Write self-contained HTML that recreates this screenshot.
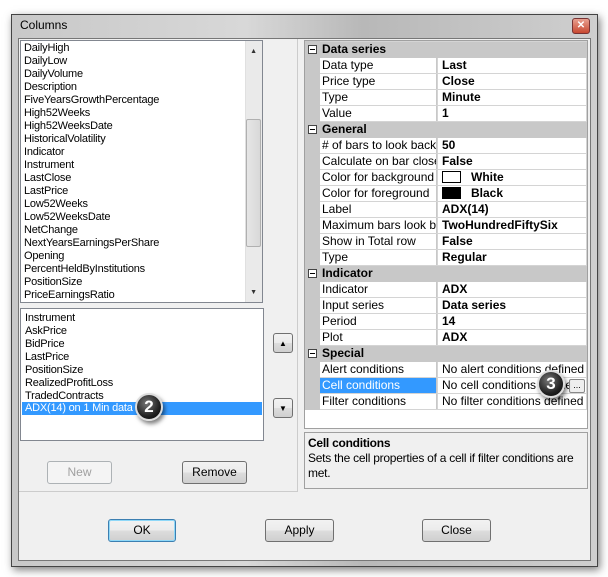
<!DOCTYPE html>
<html><head><style>
*{margin:0;padding:0;box-sizing:border-box}
body{width:608px;height:577px;background:#fff;position:relative;overflow:hidden;font-family:"Liberation Sans",sans-serif;font-size:11px;color:#000}
.a{position:absolute}
.win{left:11px;top:14px;width:587px;height:553px;background:linear-gradient(90deg,#c8c8c8,#d8d8d8 40%,#b8b8b8 60%,#cfcfcf);border:1px solid #444;box-shadow:2px 3px 8px rgba(0,0,0,.5)}
.client{left:18px;top:38px;width:573px;height:523px;background:#f0f0f0;border:1px solid #777}
.list{background:#fff;border:1px solid #828790}
.it{position:absolute;left:4px;height:13px;line-height:13px;white-space:nowrap;letter-spacing:-0.2px}
.btn{position:absolute;border:1px solid #707070;border-radius:3px;background:linear-gradient(#f2f2f2,#ebebeb 50%,#dddddd 50%,#cfcfcf);text-align:center;line-height:20px;font-size:12px}
.row{position:absolute;left:305px;width:282px;height:16px;line-height:15px;font-size:12px}
.row .n{position:absolute;left:15px;width:117px;height:15px;background:#fff;padding-left:2px;overflow:hidden;white-space:nowrap;border-right:1px solid #c8c8c8;color:#000}
.row .v{position:absolute;left:133px;width:148px;height:15px;background:#fff;padding-left:4px;font-weight:bold;white-space:nowrap;overflow:hidden}
.cat{background:#c8c8c8;font-weight:bold}
.cat span.b{position:absolute;left:3px;top:3px;width:9px;height:9px;border:1px solid #444;background:#fff}
.cat span.b:after{content:"";position:absolute;left:1px;top:3px;width:5px;height:1px;background:#000}
.cat .t{position:absolute;left:17px}
.badge{position:absolute;width:28px;height:28px;border-radius:50%;background:radial-gradient(circle at 40% 35%,#777,#222 60%,#000);border:2px solid #ddd;color:#fff;font-weight:bold;font-size:17px;text-align:center;line-height:24px;box-shadow:2px 3px 4px rgba(0,0,0,.5)}
</style></head><body>
<div class="a win"></div>
<div class="a" style="left:20px;top:18px;font-size:12px;color:#000">Columns</div>
<div class="a" style="left:572px;top:18px;width:18px;height:16px;border:1px solid #733;border-radius:3px;background:linear-gradient(#e8a090,#c84830);color:#fff;font-size:10px;text-align:center;line-height:14px;font-weight:bold">✕</div>
<div class="a client"></div>
<div class="a" style="left:19px;top:39px;width:279px;height:453px;border-right:1px solid #ccc;border-bottom:1px solid #ccc"></div>
<div class="a list" style="left:20px;top:40px;width:243px;height:263px;overflow:hidden">
<div class="a" style="right:0;top:0;width:17px;height:261px;background:#eaeaea;border-left:1px solid #e0e0e0"></div>
<div class="a" style="right:5px;top:7px;font-size:7px;color:#333">▲</div>
<div class="a" style="right:5px;top:248px;font-size:7px;color:#333">▼</div>
<div class="a" style="right:1px;top:78px;width:15px;height:128px;background:linear-gradient(90deg,#e6e6e6,#d8d8d8);border:1px solid #b0b0b0;border-radius:2px"></div>
</div>
<div class="a" style="left:20px;top:40px;width:226px;height:263px;overflow:hidden">
<div class="it" style="top:2px">DailyHigh</div><div class="it" style="top:15px">DailyLow</div><div class="it" style="top:28px">DailyVolume</div><div class="it" style="top:41px">Description</div><div class="it" style="top:54px">FiveYearsGrowthPercentage</div><div class="it" style="top:67px">High52Weeks</div><div class="it" style="top:80px">High52WeeksDate</div><div class="it" style="top:93px">HistoricalVolatility</div><div class="it" style="top:106px">Indicator</div><div class="it" style="top:119px">Instrument</div><div class="it" style="top:132px">LastClose</div><div class="it" style="top:145px">LastPrice</div><div class="it" style="top:158px">Low52Weeks</div><div class="it" style="top:171px">Low52WeeksDate</div><div class="it" style="top:184px">NetChange</div><div class="it" style="top:197px">NextYearsEarningsPerShare</div><div class="it" style="top:210px">Opening</div><div class="it" style="top:223px">PercentHeldByInstitutions</div><div class="it" style="top:236px">PositionSize</div><div class="it" style="top:249px">PriceEarningsRatio</div>
</div>
<div class="a list" style="left:20px;top:308px;width:244px;height:133px">
<div class="it" style="top:3px">Instrument</div><div class="it" style="top:16px">AskPrice</div><div class="it" style="top:29px">BidPrice</div><div class="it" style="top:42px">LastPrice</div><div class="it" style="top:55px">PositionSize</div><div class="it" style="top:68px">RealizedProfitLoss</div><div class="it" style="top:81px">TradedContracts</div>
<div class="a" style="left:1px;top:93px;width:240px;height:13px;background:#3399ff"></div>
<div class="it" style="top:93px;color:#fff">ADX(14) on 1 Min data</div>
</div>
<div class="badge" style="left:135px;top:393px">2</div>
<div class="btn" style="left:273px;top:333px;width:20px;height:20px;font-size:8px">▲</div>
<div class="btn" style="left:273px;top:398px;width:20px;height:20px;font-size:8px">▼</div>
<div class="btn" style="left:47px;top:461px;width:65px;height:23px;color:#a0a0a0;background:#f4f4f4;border-color:#adb2b5">New</div>
<div class="btn" style="left:182px;top:461px;width:65px;height:23px">Remove</div>
<div class="a" style="left:304px;top:40px;width:284px;height:389px;background:#fff;border:1px solid #a0a0a0"></div>
<div class="a" style="left:305px;top:41px;width:282px;height:369px;background:#d4d4d4"></div>
<div class="a" style="left:305px;top:41px;width:15px;height:369px;background:#c8c8c8"></div>
<div class="row cat" style="top:42px"><span class="b"></span><span class="t">Data series</span></div>
<div class="row" style="top:58px"><div class="n">Data type</div><div class="v">Last</div></div>
<div class="row" style="top:74px"><div class="n">Price type</div><div class="v">Close</div></div>
<div class="row" style="top:90px"><div class="n">Type</div><div class="v">Minute</div></div>
<div class="row" style="top:106px"><div class="n">Value</div><div class="v">1</div></div>
<div class="row cat" style="top:122px"><span class="b"></span><span class="t">General</span></div>
<div class="row" style="top:138px"><div class="n"># of bars to look back</div><div class="v">50</div></div>
<div class="row" style="top:154px"><div class="n">Calculate on bar close</div><div class="v">False</div></div>
<div class="row" style="top:170px"><div class="n">Color for background</div><div class="v"><span style="display:inline-block;width:19px;height:12px;border:1px solid #000;background:#fff;vertical-align:-2px;margin-right:10px"></span>White</div></div>
<div class="row" style="top:186px"><div class="n">Color for foreground</div><div class="v"><span style="display:inline-block;width:19px;height:12px;border:1px solid #000;background:#000;vertical-align:-2px;margin-right:10px"></span>Black</div></div>
<div class="row" style="top:202px"><div class="n">Label</div><div class="v">ADX(14)</div></div>
<div class="row" style="top:218px"><div class="n">Maximum bars look back</div><div class="v">TwoHundredFiftySix</div></div>
<div class="row" style="top:234px"><div class="n">Show in Total row</div><div class="v">False</div></div>
<div class="row" style="top:250px"><div class="n">Type</div><div class="v">Regular</div></div>
<div class="row cat" style="top:266px"><span class="b"></span><span class="t">Indicator</span></div>
<div class="row" style="top:282px"><div class="n">Indicator</div><div class="v">ADX</div></div>
<div class="row" style="top:298px"><div class="n">Input series</div><div class="v">Data series</div></div>
<div class="row" style="top:314px"><div class="n">Period</div><div class="v">14</div></div>
<div class="row" style="top:330px"><div class="n">Plot</div><div class="v">ADX</div></div>
<div class="row cat" style="top:346px"><span class="b"></span><span class="t">Special</span></div>
<div class="row" style="top:362px"><div class="n">Alert conditions</div><div class="v" style="font-weight:normal">No alert conditions defined</div></div>
<div class="row" style="top:378px"><div class="n" style="background:#3399ff;color:#fff">Cell conditions</div><div class="v" style="font-weight:normal">No cell conditions defined</div></div>
<div class="row" style="top:394px"><div class="n">Filter conditions</div><div class="v" style="font-weight:normal">No filter conditions defined</div></div>
<div class="a" style="left:569px;top:379px;width:16px;height:14px;border:1px solid #888;border-radius:2px;background:#eee;font-size:9px;text-align:center;line-height:10px">...</div>
<div class="badge" style="left:537px;top:370px">3</div>
<div class="a" style="left:304px;top:432px;width:284px;height:57px;border:1px solid #a0a0a0;background:#f0f0f0;padding:3px 3px;font-size:12px;line-height:15px;letter-spacing:-0.25px">
<b>Cell conditions</b><br>Sets the cell properties of a cell if filter conditions are met.</div>
<div class="btn" style="left:108px;top:519px;width:68px;height:23px;border-color:#3c7fb1;box-shadow:inset 0 0 0 1px #8fd8f8">OK</div>
<div class="btn" style="left:265px;top:519px;width:69px;height:23px">Apply</div>
<div class="btn" style="left:422px;top:519px;width:69px;height:23px">Close</div>
</body></html>
